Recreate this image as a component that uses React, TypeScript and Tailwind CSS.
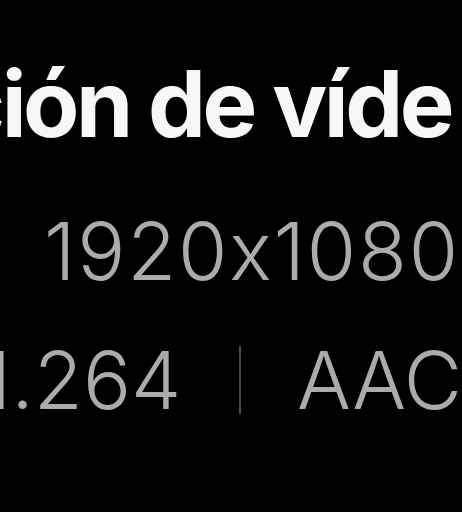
import React from 'react';

const App = () => {
  return (
    <div className="w-[462px] h-[512px] bg-black overflow-hidden font-['Inter',sans-serif] [font-feature-settings:'calt'_0] pt-[58px]">
      <div className="whitespace-nowrap text-[92px] leading-[92px] font-bold text-[#f7f7f7] ml-[-49px] tracking-[-3.5px]">
        ción de víde
      </div>
      <div className="whitespace-nowrap text-[80px] leading-[80px] font-light text-[#ababab] mt-[61px] ml-[44px] tracking-[1.8px]">
        1920x1080
      </div>
      <div className="flex items-center whitespace-nowrap text-[80px] leading-[80px] font-light text-[#ababab] mt-[49px] ml-[-48px]">
        <span>H.264</span>
        <span className="w-[2px] h-[68px] bg-[#4a4a4a] ml-[58px] mr-[56px]" />
        <span>AAC</span>
      </div>
    </div>
  );
};

export default App;
